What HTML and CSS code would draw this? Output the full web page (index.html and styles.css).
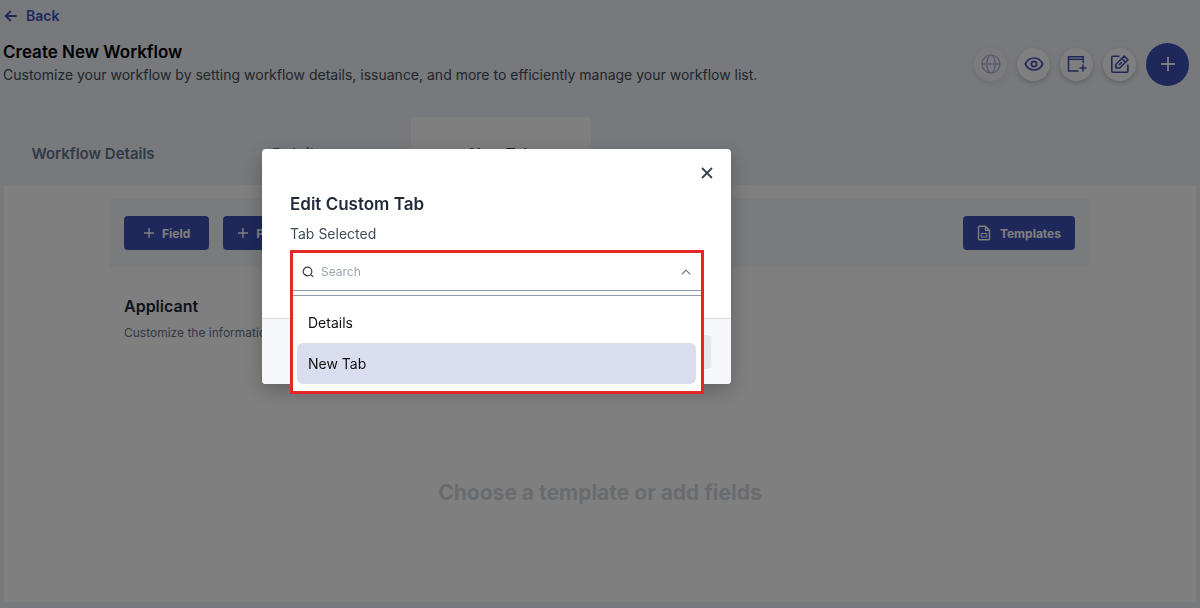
FILE: index.html
```html
<!DOCTYPE html>
<html lang="en">
<head>
<meta charset="utf-8">
<meta name="viewport" content="width=device-width, initial-scale=1">
<title>Create New Workflow</title>
<link rel="stylesheet" href="styles.css">
</head>
<body>
<div class="page">
  <a class="back" href="#">
    <svg width="14" height="14" viewBox="0 0 14 14" fill="none" stroke="currentColor" stroke-width="1.8"><path d="M12.5 7H2M6.8 2 1.8 7l5 5"/></svg>
    Back
  </a>
  <header class="header">
    <div class="heading">
      <h1 class="title">Create New Workflow</h1>
      <p class="subtitle">Customize your workflow by setting workflow details, issuance, and more to efficiently manage your workflow list.</p>
    </div>
    <div class="actions">
      <button class="round" type="button" aria-label="Publish" disabled>
        <svg width="20" height="20" viewBox="0 0 20 20" fill="none" stroke="currentColor" stroke-width="1.2"><circle cx="10" cy="10" r="9"/><ellipse cx="10" cy="10" rx="4.2" ry="9"/><path d="M1 10h18"/></svg>
      </button>
      <button class="round" type="button" aria-label="Preview">
        <svg width="20" height="20" viewBox="0 0 20 20" fill="none" stroke="currentColor" stroke-width="1.7"><path d="M1.2 10C3.2 6 6.3 4 10 4s6.8 2 8.8 6c-2 4-5.1 6-8.8 6s-6.8-2-8.8-6z" stroke-linejoin="round"/><circle cx="10" cy="10" r="2.6"/></svg>
      </button>
      <button class="round" type="button" aria-label="Add tab">
        <svg width="20" height="20" viewBox="0 0 20 20" fill="none" stroke="currentColor" stroke-width="1.5"><path d="M11.5 17H1.5V2.8h14.7v6.5"/><path d="M1.5 5.3h14.7"/><path d="M16 10.5v7M12.5 14h7"/></svg>
      </button>
      <button class="round" type="button" aria-label="Edit tab">
        <svg width="20" height="20" viewBox="0 0 20 20" fill="none" stroke="currentColor" stroke-width="1.6" stroke-linejoin="round"><path d="M9.5 2.2H2.7a.9.9 0 0 0-.9.9v14.2c0 .5.4.9.9.9H17c.5 0 .9-.4.9-.9V10.5"/><path d="M6 14v-3.7l8.3-8.3 3.7 3.7L9.7 14zM11.8 4.5l3.7 3.7M9 11l3-3"/></svg>
      </button>
      <button class="round add" type="button" aria-label="Add">
        <svg width="16" height="16" viewBox="0 0 16 16" fill="none" stroke="currentColor" stroke-width="1.8"><path d="M8 1v14M1 8h14"/></svg>
      </button>
    </div>
  </header>
  <nav class="tabs">
    <a class="tab" href="#">Workflow Details</a>
    <a class="tab" href="#">Details</a>
    <a class="tab current" href="#">New Tab</a>
  </nav>
  <main class="panel">
    <div class="content">
      <div class="toolbar">
        <button class="btn" type="button"><svg width="12" height="12" viewBox="0 0 12 12" fill="none" stroke="currentColor" stroke-width="1.4"><path d="M6 1v10M1 6h10"/></svg>Field</button>
        <button class="btn compact" type="button"><svg width="12" height="12" viewBox="0 0 12 12" fill="none" stroke="currentColor" stroke-width="1.4"><path d="M6 1v10M1 6h10"/></svg>Page</button>
        <button class="btn compact templates" type="button"><svg width="14" height="16" viewBox="0 0 14 16" fill="none" stroke="currentColor" stroke-width="1.4" stroke-linejoin="round"><path d="M8.5 1.2H2.8c-.7 0-1.3.5-1.3 1.2v11.2c0 .7.6 1.2 1.3 1.2h8.4c.7 0 1.3-.5 1.3-1.2V5.2zM8.5 1.2v4h4"/><path d="M4.2 8.5h5.6v3.5H4.2z" stroke-width="1"/></svg>Templates</button>
      </div>
      <section class="section">
        <h2 class="section-title">Applicant</h2>
        <p class="section-text">Customize the information</p>
      </section>
    </div>
    <p class="empty">Choose a template or add fields</p>
  </main>
</div>

<div class="overlay">
  <div class="modal" role="dialog" aria-modal="true" aria-labelledby="dialog-title">
    <div class="modal-body">
      <button class="close" type="button" aria-label="Close"><svg width="12" height="12" viewBox="0 0 12 12" fill="none" stroke="currentColor" stroke-width="1.8"><path d="M1 1l10 10M11 1 1 11"/></svg></button>
      <h2 class="modal-title" id="dialog-title">Edit Custom Tab</h2>
      <label class="label" for="tab-search">Tab Selected</label>
      <div class="picker">
        <div class="search">
          <svg width="12" height="12" viewBox="0 0 12 12" fill="none" stroke="#374151" stroke-width="1.2"><circle cx="5.5" cy="5.5" r="4.3"/><path d="M8.6 8.6l2.6 2.2"/></svg>
          <input class="search-input" id="tab-search" type="text" placeholder="Search">
          <svg width="10" height="6" viewBox="0 0 10 6" fill="none" stroke="#6b7785" stroke-width="1.2"><path d="M.8 5.3 5 1.1l4.2 4.2"/></svg>
        </div>
        <div class="options" role="listbox" aria-label="Tabs">
          <button class="option" type="button" role="option" aria-selected="false">Details</button>
          <button class="option selected" type="button" role="option" aria-selected="true">New Tab</button>
        </div>
      </div>
    </div>
    <div class="modal-footer"><button class="save" type="button" aria-label="Save" disabled></button></div>
  </div>
</div>
</body>
</html>
```
FILE: styles.css
```css
* { box-sizing: border-box; }
body {
  margin: 0;
  background: #f0f2f9;
  color: #414c58;
  font-family: Inter, "Liberation Sans", sans-serif;
}
h1, h2, p { margin: 0; }
button, input { font: inherit; }
button { border: 0; padding: 0; }
svg { display: block; flex: none; }

.page {
  min-height: 100vh;
  display: flex;
  flex-direction: column;
  padding: 6px 4px;
}
.back {
  display: flex;
  align-items: center;
  align-self: flex-start;
  gap: 8px;
  color: #3f51b5;
  font-size: 14px;
  line-height: 20px;
  font-weight: 600;
  text-decoration: none;
}
.header {
  display: flex;
  justify-content: space-between;
  margin-top: 15px;
  padding-right: 7px;
}
.heading { margin-left: -1px; }
.title {
  color: #000;
  font-size: 17px;
  line-height: 22px;
  font-weight: 600;
}
.subtitle {
  font-size: 14px;
  line-height: 24px;
}
.actions {
  display: flex;
  align-items: center;
  gap: 10px;
}
.round {
  display: grid;
  place-items: center;
  width: 33px;
  height: 33px;
  border-radius: 50%;
  background: #fff;
  color: #3f51b5;
  box-shadow: 0 2px 5px rgba(0, 0, 0, .2);
}
.round:disabled {
  opacity: .4;
}
.round.add {
  width: 43px;
  height: 43px;
  background: #3f51b5;
  color: #fff;
  box-shadow: none;
}
.tabs {
  display: flex;
  gap: 24px;
  margin: 30px 0 0 -1px;
}
.tab {
  width: 180px;
  padding: 26px 0 20px;
  border-radius: 4px 4px 0 0;
  color: #64748b;
  font-size: 15px;
  line-height: 22px;
  font-weight: 600;
  text-align: center;
  text-decoration: none;
}
.tab.current {
  background: #fff;
  color: #374151;
}
.panel {
  flex: 1;
  background: #fff;
}
.content {
  padding: 13px 107px 0 106px;
}
.toolbar {
  display: flex;
  gap: 14px;
  padding: 18px 14px 17px;
  background: #f5f7fb;
}
.btn {
  display: flex;
  align-items: center;
  gap: 7px;
  height: 34px;
  padding: 0 19px;
  border-radius: 4px;
  background: #3f51b5;
  color: #fff;
  font-size: 12px;
  font-weight: 700;
}
.compact { padding: 0 14px; }
.templates {
  gap: 9px;
  margin-left: auto;
}
.section { padding: 28px 14px 0; }
.section-title {
  color: #1f2937;
  font-size: 16px;
  line-height: 22px;
  font-weight: 600;
}
.section-text {
  margin-top: 6px;
  color: #64748b;
  font-size: 12px;
  line-height: 20px;
}
.empty {
  margin-top: 135px;
  color: #d1d8de;
  font-size: 21px;
  line-height: 30px;
  font-weight: 700;
  text-align: center;
}

.overlay {
  position: fixed;
  inset: 0;
  display: flex;
  justify-content: center;
  align-items: flex-start;
  padding: 149px 207px 0 0;
  background: rgba(0, 0, 0, .5);
}
.modal {
  width: 469px;
  border-radius: 4px;
  background: #fff;
  box-shadow: 0 6px 20px rgba(0, 0, 0, .25);
}
.modal-body {
  display: flex;
  flex-direction: column;
  height: 169px;
  padding: 14px 27px 0 28px;
}
.close {
  display: grid;
  place-items: center;
  align-self: flex-end;
  flex: none;
  width: 20px;
  height: 20px;
  margin-right: -13px;
  background: none;
  color: #374151;
}
.modal-title {
  margin-top: 10px;
  color: #1f2937;
  font-size: 17px;
  line-height: 22px;
  font-weight: 600;
}
.label {
  margin-top: 9px;
  font-size: 14px;
  line-height: 20px;
}
.picker {
  z-index: 1;
  flex: none;
  margin-top: 6px;
  border: 3px solid #e32626;
  background: #fff;
}
.search {
  display: flex;
  align-items: center;
  gap: 7px;
  height: 38px;
  padding: 0 10px 0 9px;
  border-bottom: 1px solid #8f9ba8;
}
.search-input {
  flex: 1;
  min-width: 0;
  padding: 0;
  border: 0;
  outline: 0;
  background: none;
  font-size: 12px;
  line-height: 20px;
}
.search-input::placeholder { color: #9ca3af; }
.options {
  display: grid;
  margin-top: 4px;
  padding: 6px 5px 7px 4px;
  border-top: 1px solid #8f9ba8;
}
.option {
  height: 41px;
  padding: 0 11px;
  border-radius: 6px;
  background: none;
  color: #111;
  font-size: 14px;
  text-align: left;
}
.option.selected { background: #dadded; }
.modal-footer {
  display: flex;
  justify-content: flex-end;
  padding: 16px 20px 15px;
  border-top: 1px solid #d9dee3;
  border-radius: 0 0 4px 4px;
  background: #f5f7fb;
}
.save {
  width: 90px;
  height: 34px;
  border-radius: 4px;
  background: #e5e8eb;
}
```
